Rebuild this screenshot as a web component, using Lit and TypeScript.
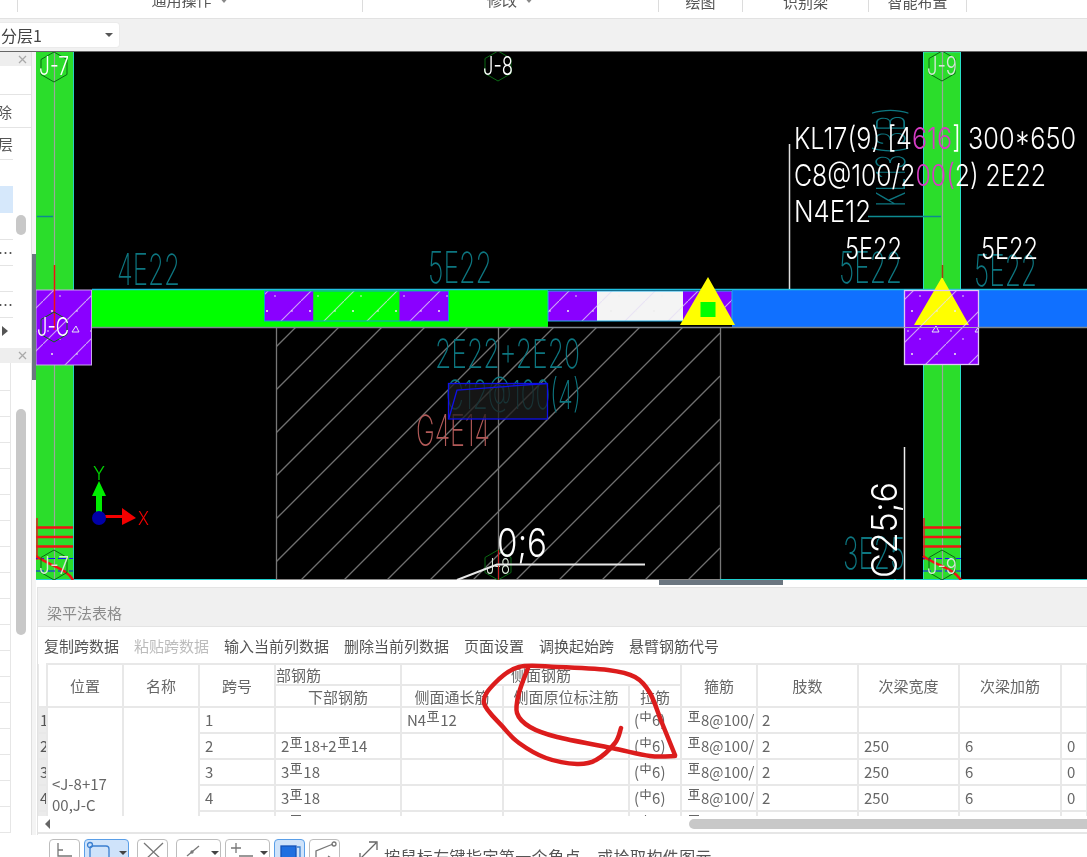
import { LitElement, html, css, svg } from 'lit';
import { customElement } from 'lit/decorators.js';

// CAD labels are squeezed to the measured width, the drawing font is very narrow
const label = (t: string, x: number, y: number, w: number, size: number, cls: string) =>
  svg`<text class=${cls} x=${x} y=${y} font-size=${size} textLength=${w} lengthAdjust="spacingAndGlyphs">${t}</text>`;

const hexagon = (cx: number, cy: number, r: number) => {
  const pts = [0, 1, 2, 3, 4, 5]
    .map((i) => {
      const a = Math.PI / 6 + (i * Math.PI) / 3;
      return `${(cx + r * Math.cos(a)).toFixed(1)},${(cy + r * Math.sin(a)).toFixed(1)}`;
    })
    .join(' ');
  return svg`<polygon class="hex" points=${pts}></polygon>`;
};

// Catmull-Rom through the points, for the hand drawn red ring
const smooth = (p: number[][]) => {
  let d = `M${p[0][0]} ${p[0][1]}`;
  for (let i = 0; i < p.length - 1; i++) {
    const a = p[i - 1] || p[i];
    const b = p[i];
    const c = p[i + 1];
    const e = p[i + 2] || c;
    d += `C${(b[0] + (c[0] - a[0]) / 6).toFixed(1)} ${(b[1] + (c[1] - a[1]) / 6).toFixed(1)} ${(c[0] - (e[0] - b[0]) / 6).toFixed(1)} ${(c[1] - (e[1] - b[1]) / 6).toFixed(1)} ${c[0]} ${c[1]}`;
  }
  return d;
};

const ringA = smooth([
  [621, 728], [615, 743], [596, 760], [577, 764], [546, 758], [519, 743], [503, 727], [484, 703],
  [495, 683], [519, 667], [557, 667], [608, 670], [635, 677], [650, 693], [662, 723], [675, 755],
]);
const ringB = smooth([
  [675, 756], [650, 756], [612, 748], [557, 737], [530, 727], [517, 713], [519, 693], [528, 668],
]);

const g3 = html`<svg class="rb" width="12" height="11" viewBox="0 0 12 11"><path d="M1 .5h10M2.5 2.5h7v4.5h-7zM6 .5v10M0 10.5h12" /></svg>`;
const g1 = html`<svg class="rb" width="11" height="11" viewBox="0 0 11 11"><path d="M1 3h9v4.500H1zM5.500 0v10.500" /></svg>`;

const rows = [
  { no: '1', low: html``, side: html`N4${g3}12`, w: '', a: '', b: '' },
  { no: '2', low: html`2${g3}18+2${g3}14`, side: html``, w: '250', a: '6', b: '0' },
  { no: '3', low: html`3${g3}18`, side: html``, w: '250', a: '6', b: '0' },
  { no: '4', low: html`3${g3}18`, side: html``, w: '250', a: '6', b: '0' },
  { no: '5', low: html`3${g3}18`, side: html``, w: '250', a: '6', b: '0' },
];

const tools = [
  { w: 31, icon: svg`<path d="M8 3v13h14M8 10h5" />` },
  { w: 45, on: true, caret: true, icon: svg`<rect x="5" y="6" width="19" height="16" rx="3" /><circle cx="5" cy="5" r="2.500" />` },
  { w: 31, gap: true, icon: svg`<path d="M6 3l19 18M25 3L6 21" />` },
  { w: 45, gap: true, caret: true, icon: svg`<path d="M10 16L22 6" /><circle cx="15" cy="12" r="1" />` },
  { w: 45, caret: true, icon: svg`<path d="M5 8h10M10 3v10M13 16h14" />` },
  { w: 31, on: true, icon: svg`<rect x="6" y="6" width="15" height="13" fill="#1f6fe0" stroke="#1452b8" /><path d="M22 7h3v11h-3" />` },
  { w: 31, icon: svg`<path d="M6 22V11l17-7M18 16l6 4" /><circle cx="24" cy="4" r="2" />` },
];

@customElement('app-root')
export class AppRoot extends LitElement {
  static styles = css`
    :host {
      display: block;
      width: 1087px;
      height: 857px;
      overflow: hidden;
      background: #fff;
      font-family: 'Noto Sans CJK SC', 'Liberation Sans', sans-serif;
      color: #555;
      filter: blur(0.35px);
    }
    .ribbon {
      display: flex;
      height: 19px;
      box-sizing: border-box;
      border-bottom: 1px solid #e2e2e2;
      overflow: hidden;
      font-size: 15px;
      line-height: 18px;
    }
    .group {
      flex: none;
      height: 12px;
      display: flex;
      align-items: flex-end;
      justify-content: center;
      gap: 7px;
      border-right: 1px solid #dcdcdc;
      box-sizing: border-box;
      padding-bottom: 4px;
      white-space: nowrap;
    }
    .group.lo {
      padding-bottom: 2px;
    }
    .group span {
      line-height: 18px;
      flex: none;
      margin-bottom: -1px;
    }
    .group i {
      width: 0;
      height: 0;
      margin-bottom: 5px;
      border: 5px solid transparent;
      border-top: 6px solid #888;
      border-bottom: 0;
    }
    .sub {
      height: 33px;
      box-sizing: border-box;
      background: #f1f1f1;
      border-bottom: 1px solid #666;
      padding-top: 3px;
    }
    .select {
      width: 120px;
      height: 26px;
      display: flex;
      align-items: center;
      justify-content: space-between;
      background: #fff;
      border: 1px solid #ebebeb;
      border-left: 0;
      border-radius: 0 4px 4px 0;
      font-size: 16px;
      color: #444;
      padding: 0 6px 0 1px;
      box-sizing: border-box;
    }
    .select i {
      border: 4px solid transparent;
      border-top: 4px solid #555;
      border-bottom: 0;
    }
    .main {
      display: flex;
      height: 783px;
    }
    .side {
      position: relative;
      flex: none;
      width: 31px;
      background: #fff;
      font-size: 16px;
      overflow: hidden;
    }
    .hdr {
      height: 14px;
      background: #eee;
      display: flex;
      justify-content: flex-end;
      align-items: center;
      padding-right: 4px;
      color: #aaa;
    }
    .hdr svg {
      display: block;
    }
    .it {
      box-sizing: border-box;
      width: 13px;
      border-bottom: 1px solid #e4e4e4;
      display: flex;
      justify-content: flex-end;
      align-items: center;
      white-space: nowrap;
      overflow: hidden;
      color: #555;
      font-size: 15px;
    }
    .it.full {
      width: 31px;
      justify-content: flex-start;
    }
    .it.full span {
      margin-left: -3px;
    }
    .it.sel {
      background: #d6e8fb;
      border-bottom: 0;
    }
    .it.tri {
      justify-content: flex-start;
      padding-left: 2px;
      border-bottom: 0;
    }
    .tri i {
      border: 5px solid transparent;
      border-left: 6px solid #555;
      border-right: 0;
    }
    .cell {
      box-sizing: border-box;
      width: 11px;
      height: 26px;
      border-right: 1px solid #e6e6e6;
      border-bottom: 1px solid #e6e6e6;
    }
    .thumb {
      position: absolute;
      left: 16px;
      width: 10px;
      border-radius: 5px;
      background: #c8c8c8;
    }
    .gutter {
      flex: none;
      width: 5px;
      background: #f4f4f4;
      border-left: 1px solid #e0e0e0;
      box-sizing: border-box;
    }
    .gutter div {
      margin-top: 202px;
      height: 126px;
      background: #6b7680;
    }
    .work {
      flex: 1;
      min-width: 0;
    }
    .canvas {
      display: block;
      width: 1051px;
      height: 528px;
      background: #000;
    }
    .canvas text {
      font-family: 'Inter', 'Liberation Sans', sans-serif;
      font-weight: 300;
    }
    .hex {
      fill: none;
      stroke: #0a6a14;
      stroke-width: 1;
    }
    .w {
      fill: #fff;
    }
    .dim {
      fill: #d8e8d8;
    }
    .gy {
      fill: #00d400;
    }
    .canvas .t,
    .canvas .r {
      font-weight: 200;
    }
    .t {
      fill: #0d7680;
    }
    .r {
      fill: #b25a58;
    }
    .m {
      fill: #d63cc4;
    }
    .strip {
      position: relative;
      height: 7px;
      background: #fff;
    }
    .strip div {
      position: absolute;
      left: 623px;
      width: 124px;
      height: 5px;
      background: #6b7680;
    }
    .panel {
      position: relative;
      margin-left: 1px;
      height: 248px;
      border-left: 1px solid #e2e2e2;
    }
    .title {
      height: 40px;
      box-sizing: border-box;
      border-top: 1px solid #e4e4e4;
      border-bottom: 1px solid #e4e4e4;
      background: #f0f0f0;
      color: #8c8c8c;
      font-size: 15px;
      line-height: 50px;
      overflow: hidden;
      padding-left: 9px;
    }
    .bar {
      height: 36px;
      display: flex;
      align-items: center;
      gap: 15px;
      padding-left: 6px;
      font-size: 15px;
      color: #555;
    }
    .bar .off {
      color: #bcbcbc;
    }
    .grid {
      height: 153px;
      overflow: hidden;
    }
    table {
      table-layout: fixed;
      border-collapse: collapse;
      width: 1049px;
      margin-left: -1px;
      font-size: 15px;
      color: #666;
    }
    td,
    th {
      box-sizing: border-box;
      border: 2px solid #e8e8e8;
      padding: 0 5px;
      font-weight: 400;
      white-space: nowrap;
      overflow: hidden;
      text-align: left;
      height: 26px;
      line-height: 22px;
    }
    th {
      text-align: center;
      color: #666;
      height: 21px;
      line-height: 18px;
    }
    th.tall {
      height: 43px;
    }
    th.cut {
      text-align: left;
      padding: 0;
    }
    th.low {
      height: 22px;
      line-height: 19px;
      padding: 0;
    }
    td.no {
      background: #ebebeb;
      padding: 0 0 0 1px;
      color: #555;
    }
    th.no {
      border-top: 0;
    }
    td.pos {
      vertical-align: top;
      padding: 65px 0 0 4px;
      line-height: 21px;
      white-space: normal;
    }
    td.tie {
      padding-left: 4px;
    }
    td.st {
      padding-left: 5px;
      padding-right: 0;
    }
    .rb {
      vertical-align: 4px;
      margin: 0 1px;
    }
    .rb path {
      fill: none;
      stroke: #666;
      stroke-width: 1.1;
    }
    .hs {
      height: 18px;
      box-sizing: border-box;
      border-bottom: 2px solid #e6e6e6;
      display: flex;
      align-items: center;
      padding-left: 7px;
    }
    .hs i {
      border: 5px solid transparent;
      border-right: 5px solid #666;
      border-left: 0;
    }
    .hs div {
      margin-left: 639px;
      flex: 1;
      height: 10px;
      background: #c8c8c8;
      border-radius: 5px 0 0 5px;
    }
    .ring {
      position: absolute;
      left: -38px;
      top: -587px;
      width: 1087px;
      height: 857px;
      pointer-events: none;
    }
    .ring path {
      fill: none;
      stroke: #dc1c1c;
      stroke-width: 4.500;
      stroke-linecap: round;
      stroke-linejoin: round;
    }
    .foot {
      height: 22px;
      display: flex;
      gap: 4px;
      padding: 4px 0 0 49px;
      box-sizing: border-box;
      overflow: hidden;
      font-size: 16px;
      color: #555;
    }
    .tool {
      flex: none;
      box-sizing: border-box;
      height: 30px;
      display: flex;
      border: 1px solid #bdbdbd;
      border-radius: 4px;
      position: relative;
    }
    .tool.gap {
      margin-left: 4px;
    }
    .tool.on {
      background: #cfe3fa;
      border-color: #5a9fe8;
    }
    .tool svg {
      flex: none;
      width: 29px;
      height: 28px;
      fill: none;
      stroke: #777;
      stroke-width: 1.300;
    }
    .tool.on svg {
      stroke: #3b7fd0;
    }
    .tool i {
      margin: 11px 0 0 5px;
      width: 0;
      height: 0;
      border: 4px solid transparent;
      border-top: 4px solid #444;
      border-bottom: 0;
    }
    .hint {
      display: flex;
      gap: 4px;
      margin-left: 14px;
      white-space: nowrap;
      line-height: 34px;
      letter-spacing: 0.4px;
    }
    .hint svg {
      flex: none;
      width: 22px;
      height: 22px;
      fill: none;
      stroke: #666;
      stroke-width: 1.300;
    }
  `;

  private drawing() {
    const hatch = [];
    for (let c = 580; c <= 1300; c += 43) {
      hatch.push(svg`<line x1="276" y1=${c - 276} x2="720" y2=${c - 720}></line>`);
    }
    const stirrups = (x1: number, x2: number) => svg`
      <path d="M${x1} 527.500H${x2}M${x1} 537H${x2}M${x1} 546.500H${x2}" stroke="#f01414" stroke-width="2.500" />
      <path d="M${x1 + 1} 518V560" stroke="#e02020" stroke-width="1.500" />
      <path d="M${x1} 558.500H${x2}M${x1} 571H${x2}" stroke="#1414ff" stroke-width="1.200" stroke-dasharray="8 3" />
      <path d="M${x1} 556C${x1 + 14} 566 ${x1 + 30} 568 ${x2} 580" fill="none" stroke="#f01414" stroke-width="2.500" />`;
    return svg`
      <defs>
        <pattern id="conc" patternUnits="userSpaceOnUse" width="43" height="43" x="0" y="0">
          <path d="M43 0L0 43" stroke="#e4dcf4" stroke-opacity=".75" stroke-width="1.100" />
          <path d="M29 31l4 -6 3 6z" fill="none" stroke="#e4e4f4" stroke-width="1" />
          <circle cx="9" cy="10" r="1" fill="#eee" />
          <circle cx="34" cy="10" r=".8" fill="#eee" />
          <circle cx="17" cy="38" r=".8" fill="#eee" />
          <circle cx="5" cy="30" r=".8" fill="#eee" />
        </pattern>
        <clipPath id="hatchClip"><rect x="276" y="328" width="444" height="252" /></clipPath>
      </defs>

      <!-- columns -->
      <rect x="36" y="52" width="37" height="528" fill="#2bdd2b" />
      <rect x="923.500" y="52" width="37" height="528" fill="#2bdd2b" stroke="#28e0c8" />
      <path d="M73.500 52V580" stroke="#28d0c0" />
      <path d="M54.500 52V580M942.500 52V580" stroke="#9aa89a" stroke-width="1.200" />

      <!-- hatched slab under the beam -->
      <g clip-path="url(#hatchClip)" stroke="#707070" stroke-width="1.300">${hatch}</g>
      <path d="M276.500 328V580M498.500 328V580M720.500 328V580" stroke="#777" stroke-width="1.300" />
      <path d="M36 579.500H276" stroke="#20d0d0" />
      <path d="M276 579.500H720" stroke="#888" />
      <path d="M720 579.500H1087" stroke="#20d0d0" />

      <!-- beam -->
      <rect x="92" y="290" width="456" height="38" fill="#00ff00" />
      <rect x="732" y="290" width="355" height="37" fill="#1070ff" />
      <path d="M92 289.500H1087" stroke="#20c0e0" stroke-width="1.500" />
      <path d="M92 327.500H1087" stroke="#808890" stroke-width="1.500" />
      <rect x="264.500" y="291" width="49" height="30" fill="#8a00ff" />
      <rect x="313.500" y="291" width="86" height="30" fill="#00ff00" />
      <rect x="399.500" y="291" width="49" height="30" fill="#8a00ff" />
      <rect x="548" y="291" width="49" height="30" fill="#8a00ff" />
      <rect x="597" y="291" width="86" height="30" fill="#f4f4f4" />
      <rect x="683" y="291" width="49" height="30" fill="#8a00ff" />
      <rect x="264.500" y="291" width="184" height="30" fill="url(#conc)" stroke="#14a0d0" />
      <rect x="548" y="291" width="184" height="30" fill="url(#conc)" stroke="#20b0e8" />

      <!-- grid heads and column caps -->
      <rect x="36" y="290" width="55.500" height="75" fill="#8a00ff" />
      <rect x="36" y="290" width="55.500" height="75" fill="url(#conc)" stroke="#c8a8e8" />
      <rect x="904.500" y="290.500" width="74" height="74" fill="#8a00ff" />
      <path d="M942 277L969 325H914z" fill="#ffff00" />
      <rect x="904.500" y="290.500" width="74" height="74" fill="url(#conc)" stroke="#e0c8f4" stroke-width="1.300" />
      <path d="M708 277L735 325H680z" fill="#ffff00" />
      <rect x="700.500" y="302" width="15" height="15" fill="#00ff00" />
      <path d="M54.500 265V330" stroke="#f01010" stroke-width="1.500" />
      <path d="M942.500 265V278" stroke="#a04010" stroke-width="1.500" />
      <path d="M904 327.500H979M54.500 327.500" stroke="#a8a0c0" stroke-width="1.200" />
      <path d="M37 216.500H53M868 216.500H941" stroke="#0d8a90" stroke-width="1.300" />

      <!-- axis labels -->
      ${hexagon(54, 67, 15)}${hexagon(498, 66, 15)}${hexagon(942, 66, 15)}${hexagon(54, 327, 15)}
      ${label('J-7', 39, 75, 30, 25, 'w')}
      ${label('J-8', 483, 75, 30, 25, 'w')}
      ${label('J-9', 927, 75, 30, 25, 'dim')}
      ${label('J-C', 37, 336, 32, 25, 'w')}

      <!-- reinforcement labels in the drawing -->
      ${label('4E22', 117, 285, 63, 43, 't')}
      ${label('5E22', 428, 283, 64, 43, 't')}
      ${label('5E22', 839, 283, 63, 43, 't')}
      ${label('5E22', 974, 286, 63, 43, 't')}
      ${label('2E22+2E20', 435, 368, 145, 40, 't')}
      ${label('C12@100(4)', 446, 409, 135, 40, 't')}
      ${label('G4E14', 416, 446, 74, 43, 'r')}
      ${label('3E25', 843, 569, 62, 44, 't')}
      <text class="t" font-size="40" textLength="100" lengthAdjust="spacingAndGlyphs" transform="translate(905 207) rotate(-90)">KL13(3B)</text>

      <rect x="448.500" y="383.500" width="99" height="35.500" fill="#1c1c1c" fill-opacity=".75" stroke="#1010e8" stroke-width="1.300" />
      <path d="M449 418L457 390 547 383.500" fill="none" stroke="#1010e8" stroke-width="1.300" />

      <!-- selected beam annotation -->
      <path d="M789.500 144V289" stroke="#ddd" stroke-width="1.500" />
      <text class="w" x="794" y="149" font-size="30" textLength="282" lengthAdjust="spacingAndGlyphs">KL17(9) [4<tspan class="m">616</tspan>] 300*650</text>
      <text class="w" x="794" y="186" font-size="30" textLength="252" lengthAdjust="spacingAndGlyphs">C8@100/2<tspan class="m">00(</tspan>2) 2E22</text>
      ${label('N4E12', 794, 222, 77, 30, 'w')}
      ${label('5E22', 845, 259, 57, 30, 'w')}
      ${label('5E22', 981, 259, 57, 30, 'w')}

      <!-- bottom grid heads -->
      ${stirrups(36, 73)}${stirrups(923, 961)}
      ${hexagon(54, 565, 15)}${hexagon(498, 565, 15)}${hexagon(942, 565, 15)}
      ${label('J-7', 39, 574, 30, 24, 'dim')}
      ${label('J-9', 927, 574, 30, 22, 'dim')}
      ${label('J-8', 486, 574, 24, 22, 'dim')}
      <path d="M498.500 550V580" stroke="#d02020" />
      <path d="M457 580L497 564.500H645" fill="none" stroke="#e8e8e8" stroke-width="2" />
      ${label('0;6', 497, 557, 50, 40, 'w')}
      <path d="M904.500 447V580" stroke="#eee" stroke-width="1.500" />
      <text class="w" font-size="36" textLength="104" lengthAdjust="spacingAndGlyphs" transform="translate(897 586) rotate(-90)">.C25;6</text>

      <!-- XY gizmo -->
      ${label('Y', 93, 480, 12, 18, 'gy')}
      <path d="M99 481l7 15h-4v22h-6v-22h-4z" fill="#00ee00" />
      <path d="M104 515h18v-7l14 10-14 7v-7h-18z" fill="#f40000" />
      <circle cx="99" cy="518" r="7" fill="#0000a8" />
      <text x="138" y="525" font-size="19" fill="#f00000" textLength="11" lengthAdjust="spacingAndGlyphs">X</text>
    `;
  }

  render() {
    const blank = Array.from({ length: 17 });
    const x = html`<svg width="9" height="9" viewBox="0 0 9 9"><path d="M1 1l7 7M8 1L1 8" stroke="#aaa" stroke-width="1.300" /></svg>`;
    return html`
      <div class="ribbon">
        <div class="group" style="width:18px"></div>
        <div class="group" style="width:345px"><span>通用操作</span><i></i></div>
        <div class="group" style="width:296px"><span>修改</span><i></i></div>
        <div class="group lo" style="width:84px"><span>绘图</span></div>
        <div class="group lo" style="width:126px"><span>识别梁</span></div>
        <div class="group lo" style="width:98px"><span>智能布置</span></div>
      </div>
      <div class="sub">
        <div class="select"><span>分层1</span><i></i></div>
      </div>
      <div class="main">
        <div class="side">
          <div class="hdr">${x}</div>
          <div class="it full" style="height:29px"></div>
          <div class="it full" style="height:33px"><span>除</span></div>
          <div class="it" style="height:32px"><span>层</span></div>
          <div class="it" style="height:26px;border:0"></div>
          <div class="it sel" style="height:27px"></div>
          <div class="it" style="height:27px"></div>
          <div class="it" style="height:26px"><span>…</span></div>
          <div class="it" style="height:26px"></div>
          <div class="it" style="height:26px"><span>…</span></div>
          <div class="it tri" style="height:26px"><i></i></div>
          <div style="height:4px"></div>
          <div class="hdr" style="height:15px">${x}</div>
          <div class="cell" style="height:28px"></div>
          ${blank.map(() => html`<div class="cell"></div>`)}
          <div class="thumb" style="top:163px;height:20px"></div>
          <div class="thumb" style="top:357px;height:226px"></div>
        </div>
        <div class="gutter"><div></div></div>
        <div class="work">
          <svg class="canvas" viewBox="36 52 1051 528">${this.drawing()}</svg>
          <div class="strip"><div></div></div>
          <div class="panel">
            <div class="title">梁平法表格</div>
            <div class="bar">
              <span>复制跨数据</span><span class="off">粘贴跨数据</span><span>输入当前列数据</span>
              <span>删除当前列数据</span><span>页面设置</span><span>调换起始跨</span><span>悬臂钢筋代号</span>
            </div>
            <div class="grid">
              <table>
                <colgroup>
                  <col style="width:9px" /><col style="width:76px" /><col style="width:76px" />
                  <col style="width:76px" /><col style="width:126px" /><col style="width:102px" />
                  <col style="width:126px" /><col style="width:52px" /><col style="width:76px" />
                  <col style="width:101px" /><col style="width:101px" /><col style="width:102px" />
                  <col style="width:26px" />
                </colgroup>
                <tr>
                  <th class="no" rowspan="2"></th>
                  <th class="tall" rowspan="2">位置</th>
                  <th rowspan="2">名称</th>
                  <th rowspan="2">跨号</th>
                  <th class="cut">部钢筋</th>
                  <th colspan="3">侧面钢筋</th>
                  <th rowspan="2">箍筋</th>
                  <th rowspan="2">肢数</th>
                  <th rowspan="2">次梁宽度</th>
                  <th rowspan="2">次梁加筋</th>
                  <th rowspan="2"></th>
                </tr>
                <tr>
                  <th class="low">下部钢筋</th>
                  <th class="low">侧面通长筋</th>
                  <th class="low">侧面原位标注筋</th>
                  <th class="low">拉筋</th>
                </tr>
                ${rows.map(
                  (r, i) => html`
                    <tr>
                      <td class="no">${r.no}</td>
                      ${i === 0
                        ? html`<td class="pos" rowspan="5">&lt;J-8+17<br />00,J-C</td>
                            <td rowspan="5"></td>`
                        : ''}
                      <td>${r.no}</td>
                      <td>${r.low}</td>
                      <td>${r.side}</td>
                      <td></td>
                      <td class="tie">(${g1}6)</td>
                      <td class="st">${g3}8@100/</td>
                      <td class="tie">2</td>
                      <td>${r.w}</td>
                      <td>${r.a}</td>
                      <td>${r.b}</td>
                      <td></td>
                    </tr>
                  `,
                )}
              </table>
            </div>
            <div class="hs"><i></i><div></div></div>
            <svg class="ring" viewBox="0 0 1087 857">
              <path d=${ringA}></path>
              <path d=${ringB}></path>
            </svg>
          </div>
        </div>
      </div>
      <div class="foot">
        ${tools.map(
          (t) => html`
            <div class="tool ${t.on ? 'on' : ''} ${t.gap ? 'gap' : ''}" style="width:${t.w}px">
              <svg viewBox="0 0 29 28">${t.icon}</svg>
              ${t.caret ? html`<i></i>` : ''}
            </div>
          `,
        )}
        <div class="hint">
          <svg viewBox="0 0 22 22"><path d="M2 20L18 4M11 3h8v8M2 14v6h6" /></svg>
          <span>按鼠标左键指定第一个角点，或拾取构件图元</span>
        </div>
      </div>
    `;
  }
}
